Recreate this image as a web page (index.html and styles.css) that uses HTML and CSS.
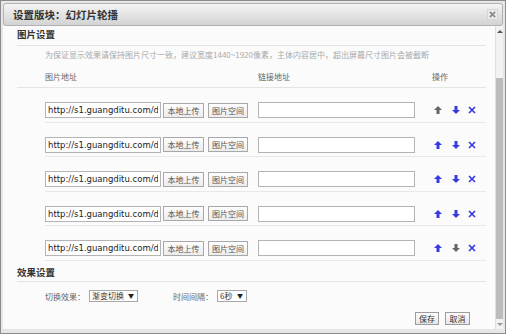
FILE: index.html
```html
<!DOCTYPE html>
<html lang="zh-CN">
<head>
    <meta charset="UTF-8">
    <title>设置版块：幻灯片轮播</title>
    <link rel="stylesheet" href="styles.css">
</head>
<body>
    <div class="dialog">
        <div class="titlebar">
            <span class="title">设置版块：幻灯片轮播</span>
            <span class="close">
                <svg viewBox="0 0 8 8" width="7" height="7"><path d="M1 1L7 7M7 1L1 7"/></svg>
            </span>
        </div>
        <div class="main">
            <div class="content">
                <div class="section-title">图片设置</div>
                <p class="notice">为保证显示效果请保持图片尺寸一致，建议宽度1440~1920像素，主体内容居中，超出屏幕尺寸图片会被截断</p>

                <div class="list-head">
                    <span class="col-img">图片地址</span>
                    <span class="col-link">链接地址</span>
                    <span class="col-op">操作</span>
                </div>

                <div class="slide-row">
                    <input class="url" type="text" value="http://s1.guangditu.com/data/slide/01.jpg">
                    <button class="btn">本地上传</button>
                    <button class="btn btn-last">图片空间</button>
                    <input class="link" type="text" value="">
                    <span class="ops">
                        <svg class="op off" viewBox="0 0 8 8"><path d="M4 0L8 4H5.5V8H2.5V4H0Z"/></svg>
                        <svg class="op" viewBox="0 0 8 8"><path d="M4 8L8 4H5.5V0H2.5V4H0Z"/></svg>
                        <svg class="op del" viewBox="0 0 8 8"><path d="M1 1L7 7M7 1L1 7"/></svg>
                    </span>
                </div>

                <div class="slide-row">
                    <input class="url" type="text" value="http://s1.guangditu.com/data/slide/02.jpg">
                    <button class="btn">本地上传</button>
                    <button class="btn btn-last">图片空间</button>
                    <input class="link" type="text" value="">
                    <span class="ops">
                        <svg class="op" viewBox="0 0 8 8"><path d="M4 0L8 4H5.5V8H2.5V4H0Z"/></svg>
                        <svg class="op" viewBox="0 0 8 8"><path d="M4 8L8 4H5.5V0H2.5V4H0Z"/></svg>
                        <svg class="op del" viewBox="0 0 8 8"><path d="M1 1L7 7M7 1L1 7"/></svg>
                    </span>
                </div>

                <div class="slide-row">
                    <input class="url" type="text" value="http://s1.guangditu.com/data/slide/03.jpg">
                    <button class="btn">本地上传</button>
                    <button class="btn btn-last">图片空间</button>
                    <input class="link" type="text" value="">
                    <span class="ops">
                        <svg class="op" viewBox="0 0 8 8"><path d="M4 0L8 4H5.5V8H2.5V4H0Z"/></svg>
                        <svg class="op" viewBox="0 0 8 8"><path d="M4 8L8 4H5.5V0H2.5V4H0Z"/></svg>
                        <svg class="op del" viewBox="0 0 8 8"><path d="M1 1L7 7M7 1L1 7"/></svg>
                    </span>
                </div>

                <div class="slide-row">
                    <input class="url" type="text" value="http://s1.guangditu.com/data/slide/04.jpg">
                    <button class="btn">本地上传</button>
                    <button class="btn btn-last">图片空间</button>
                    <input class="link" type="text" value="">
                    <span class="ops">
                        <svg class="op" viewBox="0 0 8 8"><path d="M4 0L8 4H5.5V8H2.5V4H0Z"/></svg>
                        <svg class="op" viewBox="0 0 8 8"><path d="M4 8L8 4H5.5V0H2.5V4H0Z"/></svg>
                        <svg class="op del" viewBox="0 0 8 8"><path d="M1 1L7 7M7 1L1 7"/></svg>
                    </span>
                </div>

                <div class="slide-row">
                    <input class="url" type="text" value="http://s1.guangditu.com/data/slide/05.jpg">
                    <button class="btn">本地上传</button>
                    <button class="btn btn-last">图片空间</button>
                    <input class="link" type="text" value="">
                    <span class="ops">
                        <svg class="op" viewBox="0 0 8 8"><path d="M4 0L8 4H5.5V8H2.5V4H0Z"/></svg>
                        <svg class="op off" viewBox="0 0 8 8"><path d="M4 8L8 4H5.5V0H2.5V4H0Z"/></svg>
                        <svg class="op del" viewBox="0 0 8 8"><path d="M1 1L7 7M7 1L1 7"/></svg>
                    </span>
                </div>

                <div class="section-title section-title-2">效果设置</div>
                <div class="effect-row">
                    <span class="label">切换效果：</span>
                    <span class="select select-effect">渐变切换<i>▼</i></span>
                    <span class="label label-2">时间间隔：</span>
                    <span class="select select-time">6秒<i>▼</i></span>
                </div>

                <div class="actions">
                    <button class="action">保存</button>
                    <button class="action action-cancel">取消</button>
                </div>
            </div>
            <div class="scrollbar">
                <span class="sb-arrow"><span class="tri-up"></span></span>
                <span class="thumb"></span>
                <span class="sb-arrow"><span class="tri-down"></span></span>
            </div>
        </div>
    </div>
</body>
</html>
```

FILE: styles.css
```css
body {
    margin: 0;
    font-family: "Noto Sans CJK SC", sans-serif;
    color: #666;
}

.dialog {
    width: 506px;
    height: 334px;
    box-sizing: border-box;
    border: 1px solid #8c8c8c;
    padding: 2px 2px 4px;
    background: #e6e6e6;
    display: flex;
    flex-direction: column;
}

/* 标题栏 */
.titlebar {
    height: 23px;
    box-sizing: border-box;
    border: 1px solid #b2b2b2;
    border-radius: 3px;
    background: linear-gradient(#f4f4f4, #d3d3d3);
    display: flex;
    align-items: center;
    justify-content: space-between;
    padding: 0 4px 0 9px;
}

.title {
    font-size: 10.5px;
    font-weight: bold;
    color: #333;
}

.close {
    width: 11px;
    height: 11px;
    box-sizing: border-box;
    border: 1px solid #d6d6d6;
    background: #ececec;
    display: flex;
    align-items: center;
    justify-content: center;
}

.close svg path {
    stroke: #8a8a8a;
    stroke-width: 2;
}

/* 主体 */
.main {
    flex: 1;
    display: flex;
    background: #fbfbfb;
    min-height: 0;
}

.content {
    flex: 1;
    padding: 0 9px 0 14px;
}

.section-title {
    font-size: 9.5px;
    font-weight: bold;
    color: #333;
    line-height: 12px;
    padding: 2px 0 5px;
    border-bottom: 1px solid #e4e4e4;
}

.section-title-2 {
    padding: 5.5px 0 3px;
}

.notice {
    margin: 3px 0 0 28px;
    font-size: 8px;
    line-height: 12px;
    color: #aaa;
    white-space: nowrap;
}

.list-head {
    display: flex;
    font-size: 8px;
    line-height: 12px;
    padding: 10px 0 4px 28px;
    border-bottom: 1px solid #e4e4e4;
}

.col-img { width: 213px; }
.col-link { width: 174px; }

.slide-row {
    margin-left: 28px;
    padding: 14px 0 3.5px;
    border-bottom: 1px solid #e8e8e8;
    display: flex;
    align-items: center;
    height: 16px;
}

.url, .link {
    height: 16px;
    box-sizing: border-box;
    border: 1px solid #b4b4b4;
    background: #fff;
    padding: 0 2px;
    margin: 0;
    outline: none;
}

.url {
    width: 116px;
    margin-right: 2px;
    font-family: "DejaVu Sans", sans-serif;
    font-size: 8.5px;
    color: #222;
}

.link {
    width: 157px;
}

.btn {
    width: 41px;
    height: 15px;
    box-sizing: border-box;
    margin: 0 4px 0 0;
    padding: 0;
    border: 1px solid #a8a8a8;
    background: linear-gradient(#fdfdfd, #ececec);
    font-family: inherit;
    font-size: 8px;
    color: #555;
    line-height: 13px;
}

.btn-last {
    width: 40px;
    margin-right: 10px;
}

.ops {
    display: flex;
    align-items: center;
    margin-left: 19px;
}

.op {
    width: 8px;
    height: 8px;
    fill: #3a3ae2;
    margin-right: 10px;
}

.op.off { fill: #666; }

.op.del {
    margin-left: -2px;
    fill: none;
    stroke: #3a3ae2;
    stroke-width: 1.7;
}

/* 效果设置 */
.effect-row {
    margin-left: 28px;
    padding-top: 8px;
    display: flex;
    align-items: center;
    font-size: 8px;
    height: 12px;
}

.label {
    width: 40px;
    margin-right: 4px;
    white-space: nowrap;
}

.label-2 {
    margin-left: 35px;
}

.select {
    height: 12px;
    box-sizing: border-box;
    border: 1px solid #a8a8a8;
    background: #fff;
    color: #333;
    line-height: 10px;
    padding: 0 3px 0 2px;
    display: flex;
    justify-content: space-between;
    align-items: center;
}

.select i {
    font-style: normal;
    font-size: 6px;
    color: #222;
}

.select-effect { width: 49px; }
.select-time { width: 30px; }

.actions {
    display: flex;
    justify-content: flex-end;
    margin: 10px 16px 0 0;
}

.action {
    width: 24px;
    height: 13px;
    box-sizing: border-box;
    margin: 0;
    padding: 0;
    border: 1px solid #9c9c9c;
    background: linear-gradient(#fdfdfd, #e6e6e6);
    font-family: inherit;
    font-size: 8px;
    line-height: 11px;
    color: #333;
}

.action-cancel {
    width: 25px;
    margin-left: 6px;
}

/* 滚动条 */
.scrollbar {
    width: 9px;
    box-sizing: border-box;
    border-left: 1px solid #dedede;
    background: #f2f2f2;
    display: flex;
    flex-direction: column;
    align-items: center;
}

.sb-arrow {
    height: 10px;
    display: flex;
    align-items: center;
    justify-content: center;
}

.tri-up, .tri-down {
    width: 0;
    height: 0;
    border-left: 3px solid transparent;
    border-right: 3px solid transparent;
}

.tri-up { border-bottom: 3px solid #555; }
.tri-down { border-top: 3px solid #999; }

.thumb {
    flex: 1;
    width: 7px;
    margin-top: 42px;
    background: #bcbcbc;
}
```
